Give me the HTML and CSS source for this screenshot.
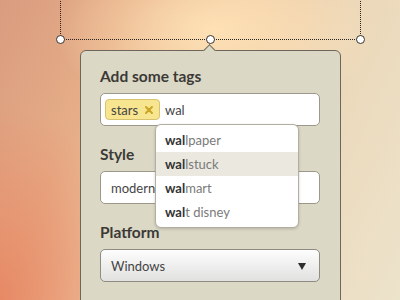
FILE: index.html
```html
<!DOCTYPE html>
<html>
<head>
<meta charset="utf-8">
<link rel="stylesheet" href="styles.css">
</head>
<body>
<div class="stage">
  <div class="selection">
    <span class="handle h-left"></span>
    <span class="handle h-mid"></span>
    <span class="handle h-right"></span>
  </div>
  <div class="panel">
    <span class="notch"></span>
    <div class="field">
      <div class="label">Add some tags</div>
      <div class="input tags">
        <span class="tag">stars
          <svg class="tag-x" width="8" height="8" viewBox="0 0 8 8"><path d="M1 1L7 7M7 1L1 7" stroke="#c9a623" stroke-width="2" stroke-linecap="round"/></svg>
        </span>
        <span class="typed">wal</span>
        <ul class="suggest">
          <li><b>wal</b>lpaper</li>
          <li class="active"><b>wal</b>lstuck</li>
          <li><b>wal</b>mart</li>
          <li><b>wal</b>t disney</li>
        </ul>
      </div>
    </div>
    <div class="field">
      <div class="label">Style</div>
      <div class="input">modern</div>
    </div>
    <div class="field">
      <div class="label">Platform</div>
      <div class="input select">
        <span>Windows</span>
        <span class="caret"></span>
      </div>
    </div>
  </div>
</div>
</body>
</html>
```
FILE: styles.css
```css
html, body {
  margin: 0;
  padding: 0;
}
body {
  width: 400px;
  height: 300px;
  overflow: hidden;
  font-family: Lato, "Open Sans", sans-serif;
  background:
    radial-gradient(ellipse 160px 90px at 215px 30px, rgba(255, 226, 182, 0.95), rgba(255, 226, 182, 0) 100%),
    radial-gradient(ellipse 140px 200px at 0px 300px, rgba(232, 130, 95, 0.85), rgba(232, 130, 95, 0) 100%),
    linear-gradient(115deg, #d99c7f 0%, #e6ae88 25%, #efcaa4 45%, #ecd7b8 65%, #ece3cb 100%);
}
.stage {
  display: flex;
  flex-direction: column;
}
.selection {
  position: relative;
  margin-top: -20px;
  margin-left: 60px;
  width: 301px;
  height: 60px;
  box-sizing: border-box;
  border: 1px dotted #2a2520;
  border-top: none;
}
.handle {
  position: absolute;
  top: 55px;
  width: 9px;
  height: 9px;
  box-sizing: border-box;
  border-radius: 50%;
  background: #fff;
  border: 1px solid #3a342e;
}
.h-left { left: -5px; }
.h-mid { left: 145px; }
.h-right { right: -5px; }

.panel {
  position: relative;
  margin-top: 10px;
  margin-left: 80px;
  width: 261px;
  box-sizing: border-box;
  padding: 16px 20px 40px 19px;
  background: #dcd8c6;
  border: 1px solid #6e665a;
  border-radius: 6px;
  display: flex;
  flex-direction: column;
  gap: 19px;
}
.notch {
  position: absolute;
  top: -5px;
  left: 124px;
  width: 8px;
  height: 8px;
  background: #dcd8c6;
  border-top: 1px solid #6e665a;
  border-left: 1px solid #6e665a;
  transform: rotate(45deg);
}
.label {
  font-size: 15.5px;
  line-height: 18px;
  font-weight: 700;
  color: #3b3a37;
  margin-bottom: 8px;
}
.input {
  position: relative;
  height: 33px;
  box-sizing: border-box;
  border: 1px solid #9d988b;
  border-radius: 5px;
  background: #fff;
  display: flex;
  align-items: center;
  padding: 0 10px;
  font-size: 13px;
  color: #454545;
}
.tags {
  padding-left: 4px;
  z-index: 2;
}
.tag {
  display: inline-flex;
  align-items: center;
  gap: 7px;
  height: 21px;
  box-sizing: border-box;
  padding: 0 6px 0 5px;
  width: 55px;
  background: #f8e58f;
  border: 1px solid #d7c26f;
  border-radius: 4px;
  color: #444;
  margin-right: 5px;
}
.tag-x {
  display: block;
}
.suggest {
  position: absolute;
  top: 30px;
  left: 54px;
  width: 144px;
  box-sizing: border-box;
  margin: 0;
  padding: 3px 0;
  list-style: none;
  background: #fff;
  border: 1px solid #b3aea2;
  border-radius: 6px;
  box-shadow: 0 1px 3px rgba(0, 0, 0, 0.18);
}
.suggest li {
  height: 24px;
  line-height: 24px;
  padding-left: 9px;
  color: #7a7a7a;
  font-size: 13px;
}
.suggest li b {
  color: #333;
  font-weight: 700;
}
.suggest li.active {
  background: #ebe8e0;
}
.select {
  justify-content: space-between;
  background: linear-gradient(#fdfdfd, #e1e1e0);
  border-color: #8f8b82;
  padding-right: 13px;
}
.caret {
  width: 0;
  height: 0;
  margin-top: 1px;
  border-left: 4.5px solid transparent;
  border-right: 4.5px solid transparent;
  border-top: 7px solid #2e2e2e;
}
```
